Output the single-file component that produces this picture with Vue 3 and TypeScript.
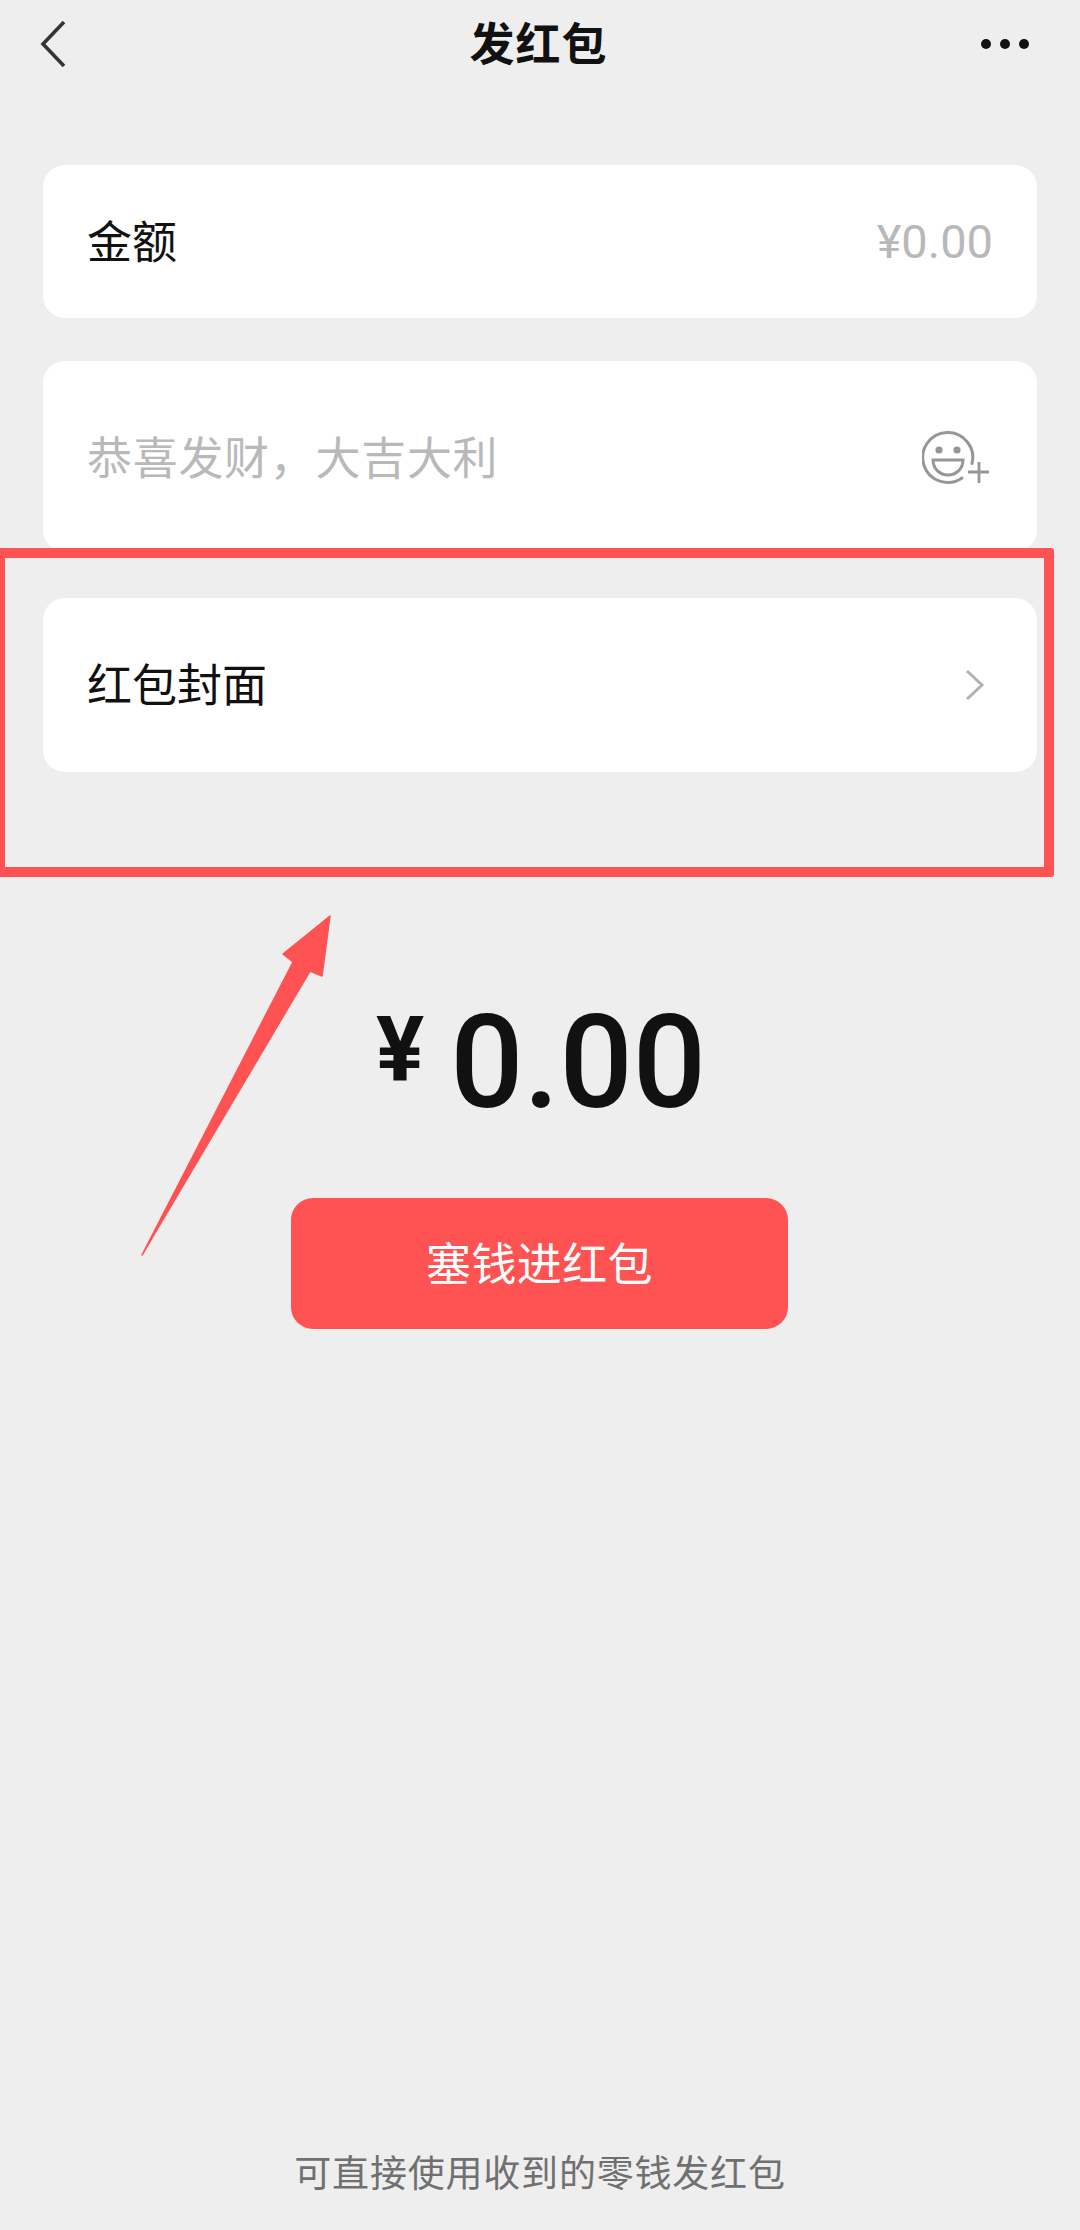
<script setup lang="ts">
const blessing = '恭喜发财，大吉大利';
const hint = '可直接使用收到的零钱发红包';
</script>

<template>
  <div class="page">
    <header class="nav">
      <svg class="back" width="28" height="48" viewBox="0 0 28 48">
        <path d="M25 2 L4 24 L25 46" fill="none" stroke="#333" stroke-width="3.6" />
      </svg>
      <h1 class="title">发红包</h1>
      <div class="more"><i></i><i></i><i></i></div>
    </header>

    <section class="card amount-card">
      <span class="label">金额</span>
      <span class="amount-hint">¥0.00</span>
    </section>

    <section class="card blessing-card">
      <span class="placeholder">{{ blessing }}</span>
      <svg class="smile" width="68" height="56" viewBox="0 0 68 56">
        <path d="M50 33.5 A25 25 0 1 0 40 48" fill="none" stroke="#969696" stroke-width="3" stroke-linecap="round" />
        <circle cx="17" cy="20" r="3.6" fill="#969696" />
        <circle cx="35" cy="20" r="3.6" fill="#969696" />
        <path d="M11 30 H41 C41 39 34 45 26 45 C18 45 11 39 11 30 Z" fill="none" stroke="#969696" stroke-width="3" />
        <path d="M46 42 H67 M57 32 V53" fill="none" stroke="#969696" stroke-width="2.8" />
      </svg>
    </section>

    <section class="card cover-card">
      <span class="label">红包封面</span>
      <svg class="chevron" width="20" height="30" viewBox="0 0 20 30">
        <path d="M2 1 L17 15 L2 29" fill="none" stroke="#b3b3b3" stroke-width="3" />
      </svg>
    </section>

    <div class="total"><span class="yen">¥</span><span class="sum">0.00</span></div>

    <button type="button" class="submit">塞钱进红包</button>

    <p class="foot">{{ hint }}</p>

    <div class="mark-box"></div>
    <svg class="mark-arrow" width="200" height="350" viewBox="0 0 200 350">
      <path
        d="M191 1 L144 39 L154 47 L3 340 L171 56 L183 61 Z"
        fill="#ff5252"
        stroke="#ff5252"
        stroke-width="1.5"
        stroke-linejoin="round"
      />
    </svg>
  </div>
</template>

<style>
html,
body {
  margin: 0;
  background: #eeeeee;
}
</style>

<style scoped>
.page {
  position: relative;
  width: 1080px;
  height: 2230px;
  overflow: hidden;
  display: flex;
  flex-direction: column;
  align-items: center;
  background: #eeeeee;
  font-family: "Liberation Sans", "Noto Sans CJK SC", sans-serif;
  color: #111;
}
.nav {
  width: 100%;
  height: 165px;
  box-sizing: border-box;
  padding: 20px 51px 0 39px;
  display: grid;
  grid-template-columns: 1fr auto 1fr;
  align-items: start;
}
.title {
  margin: -3px 0 0 9px;
  font-family: "Noto Sans CJK SC", sans-serif;
  font-size: 45px;
  line-height: 50px;
  font-weight: 700;
  letter-spacing: 1px;
  color: #111;
}
.back {
  display: block;
}
.more {
  display: flex;
  justify-self: end;
  gap: 9px;
  padding-top: 19px;
}
.more i {
  width: 10px;
  height: 10px;
  border-radius: 50%;
  background: #111;
}
.card {
  width: 994px;
  box-sizing: border-box;
  background: #fff;
  border-radius: 22px;
  display: flex;
  justify-content: space-between;
  align-items: center;
  padding: 0 44px;
  flex: none;
}
.amount-card {
  height: 153px;
}
.blessing-card {
  height: 191px;
  margin-top: 43px;
  padding-right: 47px;
}
.cover-card {
  height: 174px;
  margin-top: 46px;
  padding-right: 52px;
}
.label {
  font-family: "Noto Sans CJK SC", sans-serif;
  font-size: 45px;
  font-weight: 400;
  line-height: 50px;
  color: #111;
  margin-top: -4px;
}
.amount-hint {
  font-family: Roboto, sans-serif;
  font-weight: 400;
  font-size: 47px;
  color: #b8b8b8;
}
.placeholder {
  font-family: "Noto Sans CJK SC", sans-serif;
  font-size: 45px;
  line-height: 50px;
  letter-spacing: 0.7px;
  color: #b9b9b9;
  margin-top: -2px;
}
.smile {
  display: block;
  margin-top: 2px;
}
.chevron {
  display: block;
}
.total {
  margin: 214px 0 0 2px;
  height: 153px;
  display: flex;
  align-items: center;
  font-family: Roboto, sans-serif;
  font-weight: 500;
  line-height: 1;
  color: #111;
}
.yen {
  font-size: 90px;
  font-weight: 700;
  margin-right: 26px;
  margin-top: -24px;
}
.sum {
  font-size: 129px;
}
.submit {
  margin: 59px 1px 0 0;
  width: 497px;
  height: 131px;
  padding: 0 0 4px;
  border: 0;
  border-radius: 22px;
  background: #ff5252;
  color: #fff;
  font-family: "Noto Sans CJK SC", sans-serif;
  font-size: 45px;
  font-weight: 400;
  letter-spacing: 0.4px;
}
.foot {
  margin: auto 0 33px;
  font-family: "Noto Sans CJK SC", sans-serif;
  font-size: 37px;
  line-height: 52px;
  letter-spacing: 0.8px;
  color: #707070;
}
.mark-box {
  position: absolute;
  left: -5px;
  top: 548px;
  width: 1059px;
  height: 329px;
  box-sizing: border-box;
  border: 10px solid #ff5252;
  border-radius: 3px;
}
.mark-arrow {
  position: absolute;
  left: 139px;
  top: 915px;
}
</style>
